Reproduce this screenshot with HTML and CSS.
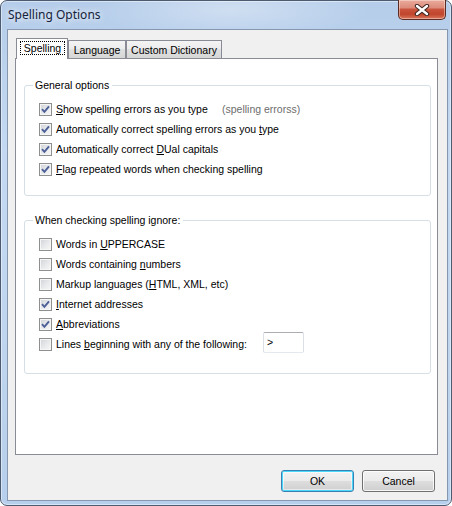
FILE: index.html
```html
<!DOCTYPE html>
<html>
<head>
<meta charset="utf-8">
<title>Spelling Options</title>
<link rel="stylesheet" href="styles.css">
</head>
<body>
<div class="window">
  <div class="titlebar">
    <span class="title">Spelling Options</span>
    <div class="close">
      <svg width="16" height="12" viewBox="0 0 16 12">
        <path d="M3 2 L13 10 M13 2 L3 10" stroke="#3b2420" stroke-width="4.4" stroke-linecap="round" fill="none"/>
        <path d="M3 2 L13 10 M13 2 L3 10" stroke="#ffffff" stroke-width="2.4" stroke-linecap="round" fill="none"/>
      </svg>
    </div>
  </div>
  <div class="client">
    <div class="tabs">
      <div class="tab tab-active tab-spelling"><span class="focus">Spelling</span></div>
      <div class="tab tab-language">Language</div>
      <div class="tab tab-dict">Custom Dictionary</div>
    </div>
    <div class="panel">
      <fieldset class="group group-general">
        <legend>General options</legend>
        <label class="row">
          <span class="cb"><svg width="11" height="11" viewBox="0 0 11 11"><path d="M2 5.2 L4.4 7.8 L9 2.4" stroke="#4c5f97" stroke-width="1.9" fill="none"/></svg></span>
          <span class="lbl lbl-show"><u>S</u>how spelling errors as you type</span>
          <span class="sample">(spelling errorss)</span>
        </label>
        <label class="row">
          <span class="cb"><svg width="11" height="11" viewBox="0 0 11 11"><path d="M2 5.2 L4.4 7.8 L9 2.4" stroke="#4c5f97" stroke-width="1.9" fill="none"/></svg></span>
          <span class="lbl">Automatically correct spelling errors as you <u>t</u>ype</span>
        </label>
        <label class="row">
          <span class="cb"><svg width="11" height="11" viewBox="0 0 11 11"><path d="M2 5.2 L4.4 7.8 L9 2.4" stroke="#4c5f97" stroke-width="1.9" fill="none"/></svg></span>
          <span class="lbl">Automatically correct <u>D</u>Ual capitals</span>
        </label>
        <label class="row">
          <span class="cb"><svg width="11" height="11" viewBox="0 0 11 11"><path d="M2 5.2 L4.4 7.8 L9 2.4" stroke="#4c5f97" stroke-width="1.9" fill="none"/></svg></span>
          <span class="lbl"><u>F</u>lag repeated words when checking spelling</span>
        </label>
      </fieldset>
      <fieldset class="group group-ignore">
        <legend>When checking spelling ignore:</legend>
        <label class="row">
          <span class="cb"></span>
          <span class="lbl">Words in <u>U</u>PPERCASE</span>
        </label>
        <label class="row">
          <span class="cb"></span>
          <span class="lbl">Words containing <u>n</u>umbers</span>
        </label>
        <label class="row">
          <span class="cb"></span>
          <span class="lbl">Markup languages (<u>H</u>TML, XML, etc)</span>
        </label>
        <label class="row">
          <span class="cb"><svg width="11" height="11" viewBox="0 0 11 11"><path d="M2 5.2 L4.4 7.8 L9 2.4" stroke="#4c5f97" stroke-width="1.9" fill="none"/></svg></span>
          <span class="lbl"><u>I</u>nternet addresses</span>
        </label>
        <label class="row">
          <span class="cb"><svg width="11" height="11" viewBox="0 0 11 11"><path d="M2 5.2 L4.4 7.8 L9 2.4" stroke="#4c5f97" stroke-width="1.9" fill="none"/></svg></span>
          <span class="lbl"><u>A</u>bbreviations</span>
        </label>
        <div class="row">
          <span class="cb"></span>
          <span class="lbl lbl-lines">Lines <u>b</u>eginning with any of the following:</span>
          <span class="textbox">&gt;</span>
        </div>
      </fieldset>
    </div>
    <div class="buttons">
      <div class="btn btn-default">OK</div>
      <div class="btn">Cancel</div>
    </div>
  </div>
</div>
</body>
</html>
```

FILE: styles.css
```css
html, body {
  margin: 0;
  padding: 0;
  background: #ffffff;
}

body {
  width: 452px;
  height: 506px;
  font-family: "Liberation Sans", Arial, sans-serif;
  font-size: 10.5px;
  color: #000;
}

.window {
  width: 452px;
  height: 506px;
  box-sizing: border-box;
  border: 1px solid #4d5b70;
  border-radius: 7px;
  background:
    radial-gradient(ellipse 140px 30px at 230px 8px, rgba(255,255,255,0.35), rgba(255,255,255,0)),
    linear-gradient(to bottom, #b5cdea 0%, #c4d9f1 30%, #bfd5ee 70%, #b6cfec 100%);
  box-shadow: inset 0 0 0 1px rgba(255,255,255,0.45);
  padding: 0 3px 4px 6px;
  display: flex;
  flex-direction: column;
}

.titlebar {
  height: 28px;
  display: flex;
  align-items: flex-start;
  padding-left: 1px;
}

.title {
  font-family: "Noto Sans", "Open Sans", sans-serif;
  font-size: 12px;
  line-height: 28px;
  color: #15223a;
  text-shadow: 0 0 6px rgba(255,255,255,0.9), 0 0 10px rgba(255,255,255,0.6);
}

.close {
  margin-left: auto;
  margin-right: 2px;
  margin-top: -1px;
  width: 48px;
  height: 20px;
  box-sizing: border-box;
  border: 1px solid #5b2b23;
  border-top: none;
  border-radius: 0 0 5px 5px;
  background: linear-gradient(to bottom, #e9ab9c 0%, #dd8c7b 40%, #c9533c 50%, #c0452c 75%, #d9785d 100%);
  box-shadow: inset 0 0 0 1px rgba(255,235,230,0.45);
  display: flex;
  align-items: center;
  justify-content: center;
}

.close svg {
  display: block;
}

.client {
  flex: 1;
  border: 1px solid #8797ae;
  background: #f0f0f0;
  padding: 8px 9px 8px 7px;
  display: flex;
  flex-direction: column;
}

.tabs {
  display: flex;
  align-items: flex-end;
  height: 20px;
  padding-left: 1px;
  position: relative;
  z-index: 1;
}

.tab {
  height: 18px;
  box-sizing: border-box;
  border: 1px solid #898c95;
  border-bottom: none;
  background: linear-gradient(to bottom, #f4f4f4 0%, #ececec 45%, #e0e0e0 50%, #d6d6d6 100%);
  display: flex;
  align-items: center;
  justify-content: center;
  line-height: 13px;
  padding-top: 1px;
}

.tab-spelling { width: 52px; }
.tab-language { width: 58px; }
.tab-dict { width: 96px; }

.tab-active {
  height: 21px;
  margin-bottom: -1px;
  background: #ffffff;
  padding-top: 0;
  padding-bottom: 3px;
}

.focus {
  display: block;
  border: 1px dotted #000;
  padding: 0 3px;
  line-height: 12px;
  margin-left: 1px;
}

.panel {
  flex: 1;
  border: 1px solid #898c95;
  background: #ffffff;
  padding: 20px 6px 0 8px;
}

.group {
  margin: 0;
  border: 1px solid #d5dfe5;
  border-radius: 3px;
  padding: 7px 8px 16px 14px;
}

.group-ignore {
  margin-top: 18px;
  padding-bottom: 19px;
}

.group legend {
  padding: 0 3px 0 2px;
  margin-left: -6px;
  line-height: 13px;
  color: #000;
}

.row {
  display: flex;
  align-items: center;
  height: 20px;
  white-space: nowrap;
}

.cb {
  width: 13px;
  height: 13px;
  box-sizing: border-box;
  border: 1px solid #8e8f8f;
  background: linear-gradient(135deg, #cfd2d7 0%, #e9eaec 55%, #f8f8f8 100%);
  box-shadow: inset 0 0 0 1px #f6f6f6;
  margin-right: 4px;
  flex: none;
}

.cb svg {
  display: block;
}

.lbl-show {
  width: 166px;
}

.sample {
  color: #6d6d6d;
}

.lbl-lines {
  width: 207px;
}

.textbox {
  align-self: flex-start;
  margin-top: -2px;
  width: 41px;
  height: 21px;
  box-sizing: border-box;
  border: 1px solid #dbdfe6;
  border-top-color: #abadb3;
  border-bottom-color: #e3e9ef;
  border-radius: 2px;
  background: #fff;
  padding-left: 3px;
  line-height: 19px;
}

.buttons {
  display: flex;
  justify-content: flex-end;
  gap: 8px;
  margin-top: 15px;
  padding-right: 3px;
}

.btn {
  width: 73px;
  height: 22px;
  box-sizing: border-box;
  border: 1px solid #707070;
  border-radius: 3px;
  background: linear-gradient(to bottom, #f2f2f2 0%, #ebebeb 48%, #dddddd 52%, #cfcfcf 100%);
  box-shadow: inset 0 0 0 1px rgba(255,255,255,0.8);
  display: flex;
  align-items: center;
  justify-content: center;
  line-height: 13px;
}

.btn-default {
  border-color: #3c7fb1;
  box-shadow: inset 0 0 0 1px #48d8fb, inset 0 0 0 2px rgba(255,255,255,0.5);
}
```
